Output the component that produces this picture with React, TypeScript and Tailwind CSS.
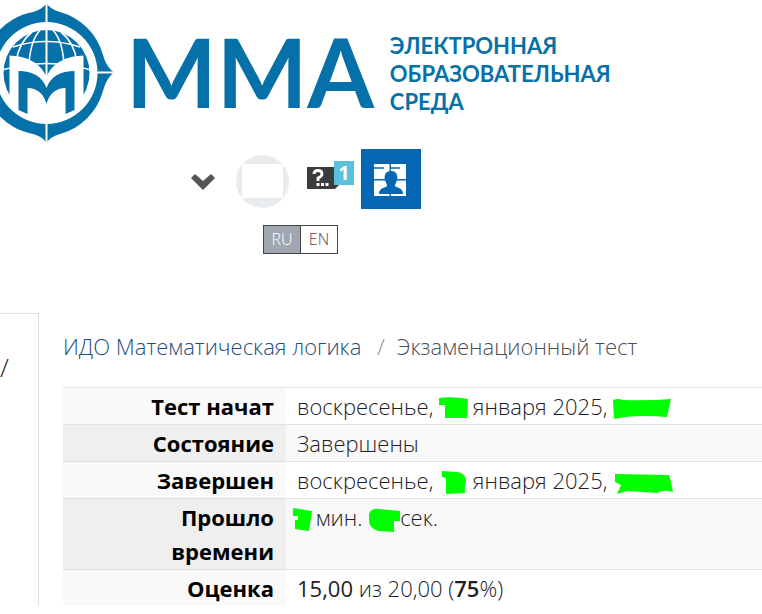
import type { ReactNode } from "react";

const langs = [
  { code: "RU", active: true },
  { code: "EN", active: false },
];

function Scribble({ width, d }: { width: number; d: string }) {
  return (
    <svg
      width={width}
      height="24"
      viewBox={`0 0 ${width} 24`}
      className="inline-block overflow-visible align-middle"
      aria-hidden="true"
    >
      <path d={d} fill="#00ff00" />
    </svg>
  );
}

function Emblem() {
  return (
    <svg viewBox="0 0 114 146" className="h-[146px] w-[114px] shrink-0" aria-hidden="true">
      <g fill="#0670a8">
        <path
          fillRule="evenodd"
          d="M46.500 3C49 7 54 10.500 60 12A62 62 0 0 1 103 55C105 62 108 68 114 72.500C108 77 105 84 103 91A62 62 0 0 1 60 134C54 135.500 49 139 46.500 143C44 139 39 135.500 33 134A62 62 0 0 1 33 12C39 10.500 44 7 46.500 3ZM46.500 22A51 51 0 1 0 46.500 124A51 51 0 1 0 46.500 22Z"
        />
        <circle cx="46.500" cy="73" r="43" />
      </g>
      <g fill="none" stroke="#fff" strokeWidth="1.600">
        <path d="M46.500 2V80M46.500 122V146M96 72.500H114" strokeWidth="2" />
        <path d="M13 47Q46.500 36 80 47" />
        <path d="M2 70Q46.500 57 91 70" />
        <path d="M40 30C33 38 30 48 29 64M53 30C60 38 63 48 64 64M32 32C23 39 18 48 16 62M61 32C70 39 75 48 77 62" />
      </g>
      <path d="M9.500 55.500C24 56 40 61 46.500 77C53 61 69 56 83.500 55.500V100L70 118H23L9.500 100Z" fill="#fff" />
      <path
        d="M18.500 71C32 71 42 76 46.500 88C51 76 61 71 74.500 71V110L65.500 114V88C56 88 49 94 46.500 104C44 94 37 88 27.500 88V114L18.500 110Z"
        fill="#0670a8"
      />
    </svg>
  );
}

function Row({ label, striped, children }: { label: string; striped?: boolean; children: ReactNode }) {
  return (
    <tr className={striped ? "border-t border-[#dee2e6] bg-[#f9f9f9]" : "border-t border-[#dee2e6]"}>
      <th
        scope="row"
        className={`w-[223px] py-px pr-3 pl-12 text-right align-top font-bold text-black ${striped ? "bg-[#efefef]" : "bg-[#f9f9f9]"}`}
      >
        {label}
      </th>
      <td className="py-px pl-[11px] align-top whitespace-nowrap">{children}</td>
    </tr>
  );
}

export default function App() {
  return (
    <div className="overflow-hidden bg-white font-['Open_Sans','Noto_Sans',sans-serif] text-[22px] leading-[34px] font-light text-[#1d2125]">
      <header className="flex flex-col">
        <div className="flex h-[146px] items-center text-[#0670a8]">
          <Emblem />
          <span className="ml-3 pb-1 font-['Lato','Open_Sans',sans-serif] text-[96px] leading-none font-bold">ММА</span>
          <span className="ml-4 pt-0.5 font-['Lato','Open_Sans',sans-serif] text-[22px] leading-7 font-bold">
            ЭЛЕКТРОННАЯ
            <br />
            ОБРАЗОВАТЕЛЬНАЯ
            <br />
            СРЕДА
          </span>
        </div>

        <div className="flex items-center pt-[3px] pl-[190px]">
          <button aria-label="Меню" className="mt-1.5">
            <svg width="26" height="18" viewBox="0 0 26 18">
              <path d="M1 5L5 1L13 8L21 1L25 5L13 17Z" fill="#555" />
            </svg>
          </button>
          <button aria-label="Профиль" className="mt-1 ml-5 flex size-[53px] items-center justify-center rounded-full bg-[#e9ecef]">
            <span className="h-[34px] w-[41px] bg-white" />
          </button>
          <button aria-label="Сообщения" className="relative ml-[18px] h-[44px] w-[47px]">
            <svg width="32" height="32" viewBox="0 0 32 32">
              <path d="M0 4H32V22L28 26H0Z" fill="#3c3c3c" />
              <path d="M7 11Q7 7.500 11 7.500Q15 7.500 15 11Q15 13.500 11 15V18" fill="none" stroke="#fff" strokeWidth="2.800" />
              <path d="M9.500 20H12.500V23H9.500ZM14 20H17V23H14ZM18.500 20H21.500V23H18.500Z" fill="#fff" />
            </svg>
            <span className="absolute top-1 right-0 h-6 w-5 bg-[#5bc0de] text-xl leading-6 font-bold text-white">1</span>
          </button>
          <button aria-label="Личный кабинет" className="ml-[7px] size-[60px] bg-[#0566b3]">
            <svg width="60" height="60" viewBox="0 0 60 60">
              <path d="M13 15H28.500V30H13ZM30 15H45V30H30ZM13 31.500H28.500V47H13ZM30 31.500H45V47H30Z" fill="#fff" />
              <path d="M13 19H23M30 19H39" stroke="#0566b3" strokeWidth="1.500" />
              <path
                d="M30 22C36 22 37 27 36 31C35 34 34 35 34 37C35 39 42 38 42 45H18C18 38 25 39 26 37C26 35 25 34 24 31C23 27 24 22 30 22Z"
                fill="#0566b3"
              />
            </svg>
          </button>
        </div>

        <div className="mt-4 ml-[263px] flex w-[75px] border border-[#444] text-[16px] leading-[27px]">
          {langs.map((l) => (
            <button
              key={l.code}
              className={l.active ? "flex-1 border-r border-[#444] bg-[#a0a7b1] text-white" : "flex-1 text-[#5f4350]"}
            >
              {l.code}
            </button>
          ))}
        </div>
      </header>

      <div className="mt-[59px] flex">
        <aside className="w-[39px] shrink-0 border-t border-r border-[#dee2e6] pt-9 text-[26px]">
          <span className="block">/</span>
        </aside>
        <main className="min-w-0 flex-1 pt-4 pl-6">
          <nav className="flex whitespace-nowrap">
            <a href="#course" className="text-[#1f4e79]">ИДО Математическая логика</a>
            <span className="pr-3 pl-4 text-[#868e96]">/</span>
            <span className="text-[#495057]">Экзаменационный тест</span>
          </nav>
          <table className="mt-6 w-full border-collapse">
            <tbody>
              <Row label="Тест начат">
                воскресенье, <Scribble width={28} d="M0 1Q14 -1 29 2L28 21L6 21V8H0Z" /> января 2025,{" "}
                <Scribble width={58} d="M0 3Q6 1 9 3Q35 4 58 2L54 20Q30 18 12 20L1 22Z" />
              </Row>
              <Row label="Состояние" striped>
                Завершены
              </Row>
              <Row label="Завершен">
                воскресенье, <Scribble width={28} d="M3 0L19 1Q27 3 27 10Q25 16 26 22L7 23V7L3 6Z" /> января 2025,{" "}
                <Scribble width={60} d="M2 3L56 4Q58 10 60 21Q50 18 44 22L14 20L4 23L8 14L2 11Z" />
              </Row>
              <Row label="Прошло времени" striped>
                <Scribble width={13} d="M-4 0L15 3L12 23L-2 21V12H1V8H-4Z" /> мин.{" "}
                <Scribble width={32} d="M1 6Q3 0 11 1L32 3V13H26V24L10 23Q1 20 1 12Z" />
                сек.
              </Row>
              <Row label="Оценка">
                <b className="font-normal">15,00</b> из 20,00 (<b className="font-semibold">75</b>%)
              </Row>
            </tbody>
          </table>
        </main>
      </div>
    </div>
  );
}
